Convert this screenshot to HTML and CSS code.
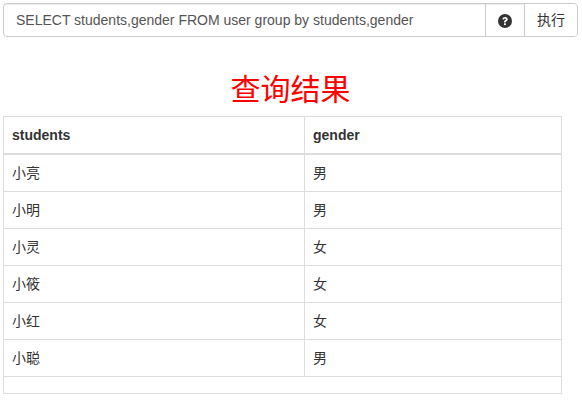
FILE: index.html
```html
<!DOCTYPE html>
<html lang="zh">
<head>
  <meta charset="UTF-8">
  <title>查询结果</title>
  <link rel="stylesheet" href="styles.css">
</head>
<body>
  <div class="input-group">
    <input class="form-control" type="text" value="SELECT students,gender FROM user group by students,gender">
    <span class="addon">
      <svg class="help-icon" viewBox="0 0 14 14" width="14" height="14">
        <circle cx="7" cy="7" r="7" fill="#333"/>
        <path d="M4.4 5.3C4.6 3.8 5.7 3 7.1 3c1.5 0 2.6.9 2.6 2.2 0 1-.6 1.6-1.4 2-.5.3-.6.5-.6 1.2H6c0-1.1.2-1.6 1-2.1.6-.3.9-.6.9-1 0-.4-.4-.7-.9-.7-.6 0-.9.3-1 1z" fill="#fff"/>
        <rect x="6" y="9.3" width="1.8" height="1.8" fill="#fff"/>
      </svg>
    </span>
    <button class="btn" type="button">执行</button>
  </div>

  <h2 class="result-title">查询结果</h2>

  <table class="result-table">
    <thead>
      <tr><th class="col-students">students</th><th>gender</th></tr>
    </thead>
    <tbody>
      <tr><td>小亮</td><td>男</td></tr>
      <tr><td>小明</td><td>男</td></tr>
      <tr><td>小灵</td><td>女</td></tr>
      <tr><td>小筱</td><td>女</td></tr>
      <tr><td>小红</td><td>女</td></tr>
      <tr><td>小聪</td><td>男</td></tr>
    </tbody>
    <tfoot>
      <tr><td class="empty" colspan="2"></td></tr>
    </tfoot>
  </table>
</body>
</html>
```

FILE: styles.css
```css
* {
  box-sizing: border-box;
}

body {
  margin: 0;
  padding: 3px 4px 0 3px;
  font-family: "Liberation Sans", "Noto Sans CJK SC", Arial, sans-serif;
  font-size: 14px;
  line-height: 20px;
  color: #333;
  background: #fff;
}

.input-group {
  display: flex;
  height: 34px;
  border: 1px solid #ccc;
  border-radius: 4px;
  box-shadow: inset 0 1px 1px rgba(0, 0, 0, 0.075);
}

.form-control {
  flex: 1;
  min-width: 0;
  padding: 6px 12px;
  border: 0;
  outline: 0;
  background: transparent;
  font: inherit;
  color: #555;
}

.addon {
  width: 39px;
  display: flex;
  align-items: center;
  justify-content: center;
  border-left: 1px solid #ccc;
}

.help-icon {
  margin-top: 2px;
}

.btn {
  width: 53px;
  padding: 0;
  border: 0;
  border-left: 1px solid #ccc;
  border-radius: 0 3px 3px 0;
  background: #fff;
  font: inherit;
  color: #333;
}

.result-title {
  margin: 33px 0 6px;
  height: 40px;
  font-size: 30px;
  font-weight: 400;
  line-height: 40px;
  text-align: center;
  color: #f00;
}

.result-table {
  width: 559px;
  border-collapse: collapse;
  table-layout: fixed;
}

.result-table th,
.result-table td {
  height: 37px;
  padding: 8px;
  border: 1px solid #ddd;
  text-align: left;
  vertical-align: middle;
}

.result-table th {
  border-bottom-width: 2px;
  font-weight: 700;
}

.col-students {
  width: 301px;
}

.result-table td.empty {
  height: 17px;
  padding: 0;
}
```
